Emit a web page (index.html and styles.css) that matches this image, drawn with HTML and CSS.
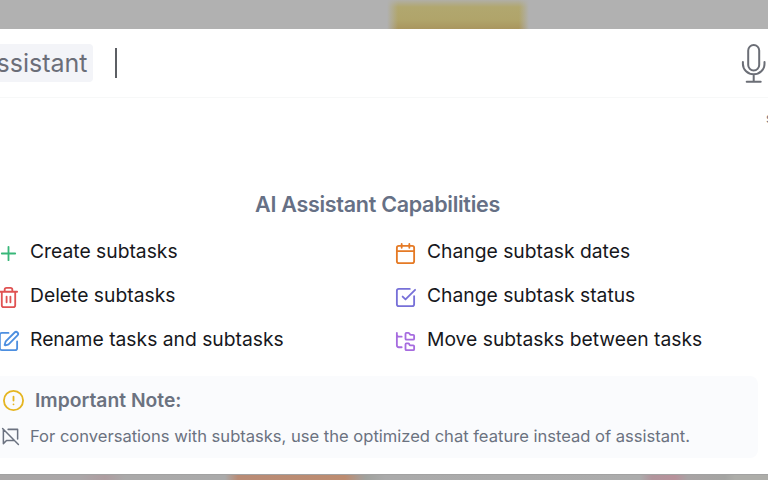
FILE: index.html
```html
<!DOCTYPE html>
<html lang="en">
<head>
<meta charset="utf-8">
<title>AI Assistant</title>
<link rel="stylesheet" href="styles.css">
</head>
<body>
<div class="screen">
  <div class="backdrop backdrop-top"></div>
  <main class="dialog">
    <header class="search">
      <span class="chip">assistant</span>
      <span class="caret"></span>
      <svg class="mic" viewBox="0 0 26 42" fill="none" stroke="#6b6e76" stroke-width="2" stroke-linecap="round"><rect x="7.200" y="2" width="11" height="25.500" rx="5.500"/><path d="M1.900 19v2a10.800 10.300 0 0 0 21.600 0v-2M12.700 32v6.800M5.700 38.800h14"/></svg>
    </header>
    <div class="hint"><span>s</span></div>
    <h1 class="title">AI Assistant Capabilities</h1>
    <div class="grid">
      <div class="item"><svg class="icon green" viewBox="0 0 24 24"><path d="M5 12h14M12 5v14"/></svg><span>Create subtasks</span></div>
      <div class="item"><svg class="icon orange" viewBox="0 0 24 24"><rect x="3" y="4" width="18" height="18" rx="2"/><path d="M8 2v4M16 2v4M3 9.500h18"/></svg><span>Change subtask dates</span></div>
      <div class="item"><svg class="icon red" viewBox="0 0 24 24"><path d="M3 6h18M19 6v14a2 2 0 0 1-2 2H7a2 2 0 0 1-2-2V6M8 6V4a2 2 0 0 1 2-2h4a2 2 0 0 1 2 2v2M10 11v6M14 11v6"/></svg><span>Delete subtasks</span></div>
      <div class="item"><svg class="icon indigo" viewBox="0 0 24 24"><path d="M21 10.700V19a2 2 0 0 1-2 2H5a2 2 0 0 1-2-2V5a2 2 0 0 1 2-2h11.500M9 11l3 3L22 4"/></svg><span>Change subtask status</span></div>
      <div class="item"><svg class="icon blue" viewBox="0 0 24 24"><path d="M12 3H5a2 2 0 0 0-2 2v14a2 2 0 0 0 2 2h14a2 2 0 0 0 2-2v-7"/><path d="M18.375 2.625a2.120 2.120 0 0 1 3 3L12.360 14.640a2 2 0 0 1-.850.500l-2.870.840a.5.5 0 0 1-.620-.620l.840-2.870a2 2 0 0 1 .500-.850z"/></svg><span>Rename tasks and subtasks</span></div>
      <div class="item"><svg class="icon purple" viewBox="0 0 24 24"><path d="M20 10a1 1 0 0 0 1-1V6a1 1 0 0 0-1-1h-2.500a1 1 0 0 1-.8-.4l-.9-1.200A1 1 0 0 0 15 3h-2a1 1 0 0 0-1 1v5a1 1 0 0 0 1 1ZM20 21a1 1 0 0 0 1-1v-3a1 1 0 0 0-1-1h-2.900a1 1 0 0 1-.88-.55l-.42-.85a1 1 0 0 0-.92-.6H13a1 1 0 0 0-1 1v5a1 1 0 0 0 1 1ZM3 5a2 2 0 0 0 2 2h3M3 3v13a2 2 0 0 0 2 2h3"/></svg><span>Move subtasks between tasks</span></div>
    </div>
    <section class="note">
      <div class="note-head"><svg class="icon yellow" viewBox="0 0 24 24"><circle cx="12" cy="12" r="10"/><path d="M12 8v4M12 16h.01"/></svg><strong>Important Note:</strong></div>
      <div class="note-text"><svg class="icon slate" viewBox="0 0 24 24"><path d="M21 15V3H9M2 2l20 20M3 3v18l4-4h10"/></svg><span>For conversations with subtasks, use the optimized chat feature instead of assistant.</span></div>
    </section>
  </main>
  <div class="backdrop backdrop-bottom"></div>
</div>
</body>
</html>
```
FILE: styles.css
```css
* { box-sizing: border-box; }
body { margin: 0; font-family: Inter, sans-serif; color: #17181c; background: #fff; }
.screen { width: 768px; height: 480px; overflow: hidden; display: flex; flex-direction: column; }
.backdrop { flex: none; background: #b1b1b1; }
.backdrop-top {
  height: 29px;
  background:
    linear-gradient(90deg, #b1b1b1 387px, #b1b1b100 398px, #b1b1b100 519px, #b1b1b1 529px),
    linear-gradient(#b1afa6 0, #b1a76f 7px, #b0a46a 20px, #a9965f 29px);
}
.backdrop-bottom {
  height: 6px;
  border-top: 1px solid #a2a2a2;
  background: linear-gradient(90deg, #a9a7a7 0, #aba7a8 80px, #ae9da0 105px, #aaa9a9 125px, #aaa 225px, #b98b75 238px, #bd8c70 345px, #a99c94 360px, #a0a29e 366px, #aaa 385px, #acacac 640px, #b1959c 652px, #b8929b 675px, #a8a3a4 688px, #a4a4a2 725px, #adada9 735px);
}
.dialog { height: 445px; flex: none; background: #fff; }
.search { height: 69px; display: flex; align-items: center; border-bottom: 1px solid #f7f8f8; }
.chip { width: 112px; height: 38px; margin-left: -19px; padding-right: 5.500px; border-radius: 4px; background: #f3f4f8; color: #6b6e78; font-size: 25px; line-height: 39px; text-align: right; }
.caret { width: 2px; height: 30px; margin-left: 22px; background: #5c5f64; }
.mic { width: 26px; height: 42px; flex: none; margin: 2px 1px 0 auto; }
.hint { height: 92px; padding-top: 12px; overflow: hidden; color: #6b7280; font-size: 13px; line-height: 16px; display: flex; }
.hint span { margin-left: 766px; }
.title { width: 755px; margin: 0; text-align: center; color: #667085; font-size: 21.500px; line-height: 28px; font-weight: 600; letter-spacing: -0.28px; }
.grid { display: grid; grid-template-columns: 397px 1fr; grid-auto-rows: 44px; margin: 11px 0 0 -3.500px; }
.item { display: flex; align-items: center; gap: 10.500px; font-size: 19.300px; line-height: 28px; white-space: nowrap; }
.icon { flex: none; width: 23px; height: 23px; fill: none; stroke: currentColor; stroke-width: 1.900; stroke-linecap: round; stroke-linejoin: round; }
.item .icon { margin-top: 5px; }
.green { color: #38b779; }
.orange { color: #e57a25; }
.red { color: #e05252; }
.indigo { color: #7770d8; }
.blue { color: #4d8fe0; }
.purple { color: #a66bdf; }
.yellow { color: #e5b521; }
.slate { color: #6b7280; }
.note { width: 774px; height: 82px; margin: 15px 0 0 -16px; padding: 10px 16px; border-radius: 8px; background: #fafbfd; color: #6b7280; }
.note-head { display: flex; align-items: center; gap: 10px; height: 28px; padding-left: 2px; font-size: 19.300px; }
.note-head strong { font-weight: 600; }
.note-text { display: flex; align-items: center; gap: 10px; height: 28px; margin-top: 8px; padding-left: 1px; font-size: 16.560px; white-space: nowrap; }
.note-text .icon { width: 19px; height: 19px; }
```
